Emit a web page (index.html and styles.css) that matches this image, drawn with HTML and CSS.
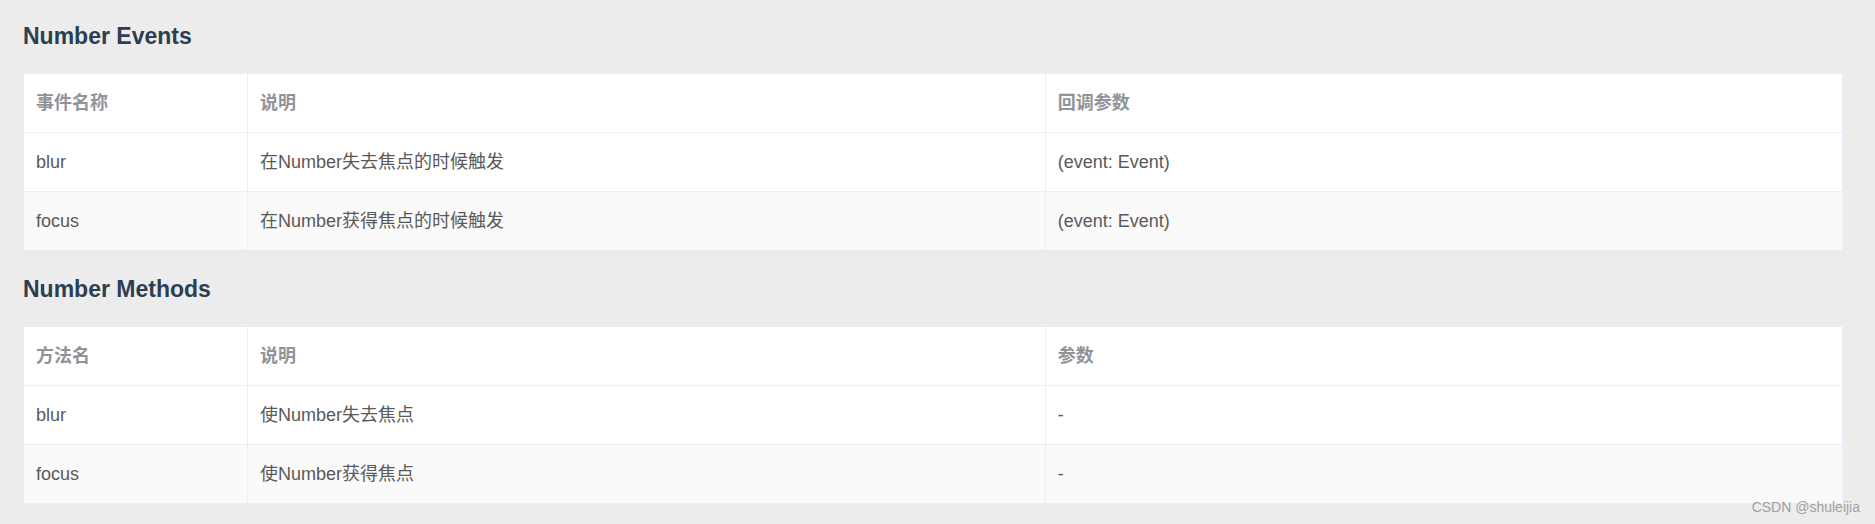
FILE: index.html
```html
<!DOCTYPE html>
<html lang="zh-CN">
<head>
<meta charset="utf-8">
<title>Number Events</title>
<link rel="stylesheet" href="styles.css">
</head>
<body>
<main class="page">
  <h3 class="title">Number Events</h3>
  <table class="api-table">
    <colgroup><col class="c1"><col class="c2"><col class="c3"></colgroup>
    <thead>
      <tr><th>事件名称</th><th>说明</th><th>回调参数</th></tr>
    </thead>
    <tbody>
      <tr><td>blur</td><td>在Number失去焦点的时候触发</td><td>(event: Event)</td></tr>
      <tr class="alt"><td>focus</td><td>在Number获得焦点的时候触发</td><td>(event: Event)</td></tr>
    </tbody>
  </table>
  <h3 class="title">Number Methods</h3>
  <table class="api-table">
    <colgroup><col class="c1"><col class="c2"><col class="c3"></colgroup>
    <thead>
      <tr><th>方法名</th><th>说明</th><th>参数</th></tr>
    </thead>
    <tbody>
      <tr><td>blur</td><td>使Number失去焦点</td><td>-</td></tr>
      <tr class="alt"><td>focus</td><td>使Number获得焦点</td><td>-</td></tr>
    </tbody>
  </table>
  <div class="watermark">CSDN @shuleijia</div>
</main>
</body>
</html>
```

FILE: styles.css
```css
html, body {
  margin: 0;
  padding: 0;
  background: #ececec;
}
body {
  font-family: "Liberation Sans", Arial, "Noto Sans CJK SC", sans-serif;
}
.page {
  position: relative;
  height: 524px;
  box-sizing: border-box;
  padding: 21px 31px 0 23px;
}
.title {
  margin: 0 0 23px 0;
  font-size: 23px;
  line-height: 30px;
  font-weight: bold;
  color: #2c3e50;
}
.api-table {
  width: 1821px;
  border-collapse: collapse;
  table-layout: fixed;
  background: #fff;
  margin-bottom: 24px;
  border-left: 1px solid #eaeefb;
  border-right: 2px solid #eaeefb;
}
.c1 { width: 224px; }
.api-table th,
.api-table td {
  text-align: left;
  padding: 0 12px;
  font-size: 18px;
  line-height: 20px;
  vertical-align: middle;
  border-left: 1px solid #eaeefb;
  white-space: nowrap;
}
.api-table th:first-child,
.api-table td:first-child {
  border-left: none;
}
.api-table thead tr {
  height: 58px;
  border-bottom: 1px solid #eaeefb;
}
.api-table th {
  color: #909399;
  font-weight: bold;
}
.api-table tbody tr {
  height: 59px;
  border-bottom: 1px solid #eaeefb;
}
.api-table tbody tr:last-child {
  border-bottom: none;
}
.api-table td {
  color: #595959;
}
.api-table tr.alt {
  background: #fafafa;
}
.watermark {
  position: absolute;
  right: 15px;
  top: 499px;
  font-size: 14px;
  line-height: 16px;
  color: #9e9e9e;
  text-shadow: 0 0 1px rgba(255,255,255,0.6);
}
```
